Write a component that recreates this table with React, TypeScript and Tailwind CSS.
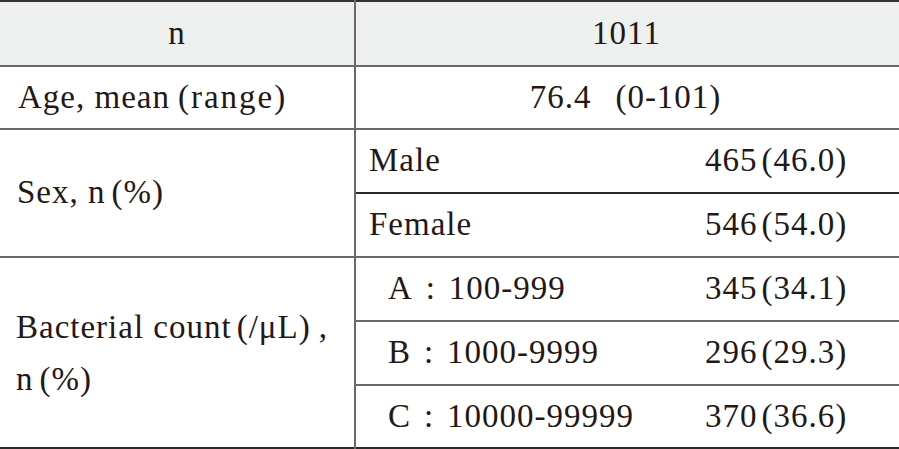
const bacteria = [
  { label: "A", range: "100-999", value: "345", pct: "34.1" },
  { label: "B", range: "1000-9999", value: "296", pct: "29.3" },
  { label: "C", range: "10000-99999", value: "370", pct: "36.6" },
];

function Count({ value, pct }: { value: string; pct: string }) {
  return (
    <span>
      {value}
      <span className="ml-[4px]">({pct})</span>
    </span>
  );
}

export default function App() {
  return (
    <div className="w-[899px] h-[449px] bg-white text-[#231815]">
      <table className="w-[899px] table-fixed border-collapse font-['Liberation_Serif'] text-[33px] tracking-[1px]">
        <colgroup>
          <col className="w-[355px]" />
          <col className="w-[350px]" />
          <col />
        </colgroup>
        <tbody>
          <tr className="h-[65px] bg-[#eeefef] border-t-2 border-t-[#333] border-b-2 border-b-[#6a6a6a]">
            <td className="text-center border-r-2 border-r-[#6a6a6a] p-0">n</td>
            <td colSpan={2} className="text-center p-0 pr-[2px]">
              1011
            </td>
          </tr>
          <tr className="h-[63px] border-b-2 border-b-[#6a6a6a]">
            <td className="pl-[18px] border-r-2 border-r-[#6a6a6a] p-0">
              Age, mean<span className="ml-[8px] tracking-[2px]">(range)</span>
            </td>
            <td colSpan={2} className="text-center p-0 pr-[4px]">
              76.4<span className="ml-[24px]">(0-101)</span>
            </td>
          </tr>
          <tr className="h-[64px] border-b-2 border-b-[#2a2a2a]">
            <td
              rowSpan={2}
              className="pl-[17px] border-r-2 border-r-[#6a6a6a] border-b-2 border-b-[#6a6a6a] p-0"
            >
              Sex, n<span className="ml-[6px]">(%)</span>
            </td>
            <td className="pl-[13px] p-0">Male</td>
            <td className="p-0">
              <Count value="465" pct="46.0" />
            </td>
          </tr>
          <tr className="h-[64px] border-b-2 border-b-[#6a6a6a]">
            <td className="pl-[13px] p-0">Female</td>
            <td className="p-0">
              <Count value="546" pct="54.0" />
            </td>
          </tr>
          {bacteria.map((row, i) => (
            <tr
              key={row.label}
              className={
                i === bacteria.length - 1
                  ? "h-[63px] border-b-2 border-b-[#2a2a2a]"
                  : "h-[64px] border-b-2 border-b-[#6a6a6a]"
              }
            >
              {i === 0 && (
                <td
                  rowSpan={3}
                  className="pl-[16px] border-r-2 border-r-[#6a6a6a] p-0 leading-[52px]"
                >
                  Bacterial count<span className="ml-[5px]">(/μL)</span>
                  <span className="ml-[8px]">,</span>
                  <br />
                  n<span className="ml-[6px]">(%)</span>
                </td>
              )}
              <td className="pl-[32px] p-0">
                {row.label}
                <span className="inline-block w-[36px] text-center">:</span>
                {row.range}
              </td>
              <td className="p-0">
                <Count value={row.value} pct={row.pct} />
              </td>
            </tr>
          ))}
        </tbody>
      </table>
    </div>
  );
}
